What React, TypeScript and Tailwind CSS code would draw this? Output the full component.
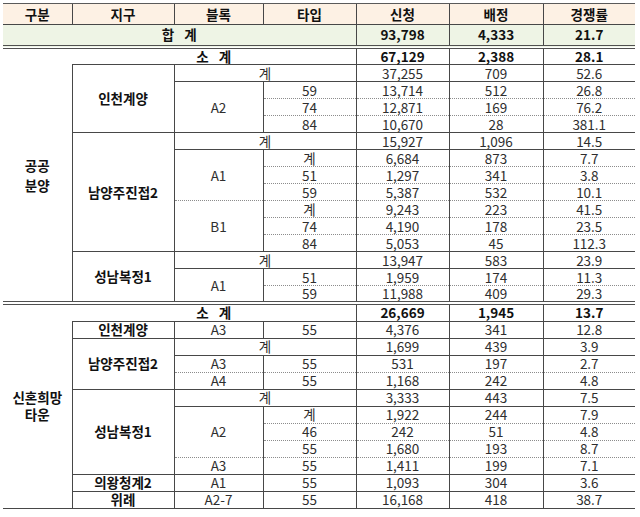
import React from "react";
import clsx from "clsx";

type Line = "solid" | "dot" | "double";

const lineClass: Record<Line, string> = {
  solid: "border-b border-b-[#474747]",
  dot: "border-b border-b-[#8c8c8c] [border-bottom-style:dotted]",
  double: "border-b-4 border-b-[#505050] [border-bottom-style:double]",
};

interface CellProps {
  children?: React.ReactNode;
  b?: Line;
  l?: boolean;
  bold?: boolean;
  colSpan?: number;
  rowSpan?: number;
  className?: string;
}

const Cell: React.FC<CellProps> = ({
  children,
  b = "solid",
  l = true,
  bold = false,
  colSpan,
  rowSpan,
  className,
}) => (
  <td
    colSpan={colSpan}
    rowSpan={rowSpan}
    className={clsx(
      "p-0 text-center align-middle whitespace-nowrap",
      lineClass[b],
      l && "border-l border-l-[#474747]",
      bold ? "font-bold text-[#111]" : "text-[#2e2e2e]",
      className
    )}
  >
    {children}
  </td>
);

const Vals: React.FC<{ v: string[]; b?: Line; bold?: boolean }> = ({
  v,
  b = "solid",
  bold,
}) => (
  <>
    {v.map((x, i) => (
      <Cell key={i} b={b} bold={bold}>
        {x}
      </Cell>
    ))}
  </>
);

const Spaced: React.FC<{ a: string; c: string }> = ({ a, c }) => (
  <>
    {a}
    <span className="inline-block w-[10px]" />
    {c}
  </>
);

const Row: React.FC<{ children: React.ReactNode; h?: string; className?: string }> = ({
  children,
  h = "h-[17px]",
  className,
}) => <tr className={clsx(h, "leading-[15px]", className)}>{children}</tr>;

export default function App() {
  const headers = ["구분", "지구", "블록", "타입", "신청", "배정", "경쟁률"];

  return (
    <div
      className="bg-white w-[640px] h-[517px] pt-[3px] pl-[3px]"
      style={{ fontFamily: "'Noto Sans CJK KR', 'Noto Sans', sans-serif" }}
    >
      <table className="table-fixed w-[632px] text-[13.5px] border-collapse">
        <colgroup>
          <col className="w-[69px]" />
          <col className="w-[102px]" />
          <col className="w-[89px]" />
          <col className="w-[93px]" />
          <col className="w-[93px]" />
          <col className="w-[94px]" />
          <col className="w-[92px]" />
        </colgroup>
        <tbody>
          <Row h="h-[21px]" className="bg-[#fdf1e4]">
            {headers.map((t, i) => (
              <Cell key={t} l={i > 0} bold className="border-t border-t-[#5a5a5a]">
                {t}
              </Cell>
            ))}
          </Row>
          <Row h="h-[22px]" className="bg-[#eef4e5]">
            <Cell colSpan={4} l={false} bold b="double">
              <Spaced a="합" c="계" />
            </Cell>
            <Vals v={["93,798", "4,333", "21.7"]} bold b="double" />
          </Row>

          {/* 공공분양 */}
          <Row h="h-[18px]">
            <Cell rowSpan={15} l={false} bold b="double" className="leading-[20px]">
              공공
              <br />
              분양
            </Cell>
            <Cell colSpan={3} l={false} bold>
              <Spaced a="소" c="계" />
            </Cell>
            <Vals v={["67,129", "2,388", "28.1"]} bold />
          </Row>
          <Row>
            <Cell rowSpan={4} bold>
              인천계양
            </Cell>
            <Cell colSpan={2}>계</Cell>
            <Vals v={["37,255", "709", "52.6"]} />
          </Row>
          <Row>
            <Cell rowSpan={3}>A2</Cell>
            <Cell b="dot">59</Cell>
            <Vals v={["13,714", "512", "26.8"]} b="dot" />
          </Row>
          <Row>
            <Cell b="dot">74</Cell>
            <Vals v={["12,871", "169", "76.2"]} b="dot" />
          </Row>
          <Row>
            <Cell>84</Cell>
            <Vals v={["10,670", "28", "381.1"]} />
          </Row>
          <Row>
            <Cell rowSpan={7} bold>
              남양주진접2
            </Cell>
            <Cell colSpan={2}>계</Cell>
            <Vals v={["15,927", "1,096", "14.5"]} />
          </Row>
          <Row>
            <Cell rowSpan={3} b="dot">
              A1
            </Cell>
            <Cell b="dot">계</Cell>
            <Vals v={["6,684", "873", "7.7"]} b="dot" />
          </Row>
          <Row>
            <Cell b="dot">51</Cell>
            <Vals v={["1,297", "341", "3.8"]} b="dot" />
          </Row>
          <Row>
            <Cell b="dot">59</Cell>
            <Vals v={["5,387", "532", "10.1"]} b="dot" />
          </Row>
          <Row>
            <Cell rowSpan={3}>B1</Cell>
            <Cell b="dot">계</Cell>
            <Vals v={["9,243", "223", "41.5"]} b="dot" />
          </Row>
          <Row>
            <Cell b="dot">74</Cell>
            <Vals v={["4,190", "178", "23.5"]} b="dot" />
          </Row>
          <Row>
            <Cell>84</Cell>
            <Vals v={["5,053", "45", "112.3"]} />
          </Row>
          <Row>
            <Cell rowSpan={3} bold b="double">
              성남복정1
            </Cell>
            <Cell colSpan={2}>계</Cell>
            <Vals v={["13,947", "583", "23.9"]} />
          </Row>
          <Row>
            <Cell rowSpan={2} b="double">
              A1
            </Cell>
            <Cell b="dot">51</Cell>
            <Vals v={["1,959", "174", "11.3"]} b="dot" />
          </Row>
          <Row>
            <Cell b="double">59</Cell>
            <Vals v={["11,988", "409", "29.3"]} b="double" />
          </Row>

          {/* 신혼희망타운 */}
          <Row h="h-[18px]">
            <Cell rowSpan={12} l={false} bold className="leading-[17px]">
              신혼희망
              <br />
              타운
            </Cell>
            <Cell colSpan={3} l={false} bold>
              <Spaced a="소" c="계" />
            </Cell>
            <Vals v={["26,669", "1,945", "13.7"]} bold />
          </Row>
          <Row>
            <Cell bold>인천계양</Cell>
            <Cell>A3</Cell>
            <Cell>55</Cell>
            <Vals v={["4,376", "341", "12.8"]} />
          </Row>
          <Row>
            <Cell rowSpan={3} bold>
              남양주진접2
            </Cell>
            <Cell colSpan={2}>계</Cell>
            <Vals v={["1,699", "439", "3.9"]} />
          </Row>
          <Row>
            <Cell b="dot">A3</Cell>
            <Cell b="dot">55</Cell>
            <Vals v={["531", "197", "2.7"]} b="dot" />
          </Row>
          <Row>
            <Cell>A4</Cell>
            <Cell>55</Cell>
            <Vals v={["1,168", "242", "4.8"]} />
          </Row>
          <Row>
            <Cell rowSpan={5} bold>
              성남복정1
            </Cell>
            <Cell colSpan={2}>계</Cell>
            <Vals v={["3,333", "443", "7.5"]} />
          </Row>
          <Row>
            <Cell rowSpan={3} b="dot">
              A2
            </Cell>
            <Cell b="dot">계</Cell>
            <Vals v={["1,922", "244", "7.9"]} b="dot" />
          </Row>
          <Row>
            <Cell b="dot">46</Cell>
            <Vals v={["242", "51", "4.8"]} b="dot" />
          </Row>
          <Row>
            <Cell b="dot">55</Cell>
            <Vals v={["1,680", "193", "8.7"]} b="dot" />
          </Row>
          <Row>
            <Cell>A3</Cell>
            <Cell>55</Cell>
            <Vals v={["1,411", "199", "7.1"]} />
          </Row>
          <Row>
            <Cell bold>의왕청계2</Cell>
            <Cell>A1</Cell>
            <Cell>55</Cell>
            <Vals v={["1,093", "304", "3.6"]} />
          </Row>
          <Row>
            <Cell bold>위례</Cell>
            <Cell>A2-7</Cell>
            <Cell>55</Cell>
            <Vals v={["16,168", "418", "38.7"]} />
          </Row>
        </tbody>
      </table>
    </div>
  );
}
